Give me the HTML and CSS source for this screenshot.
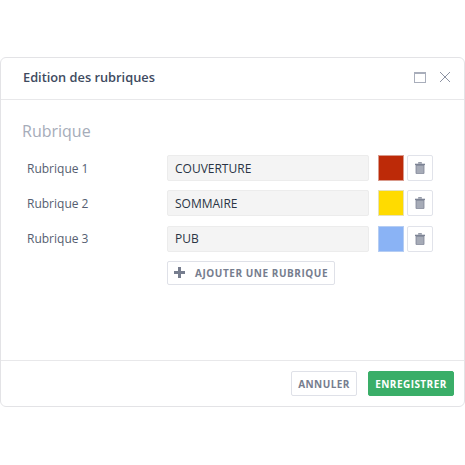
FILE: index.html
```html
<!DOCTYPE html>
<html lang="fr">
<head>
    <meta charset="UTF-8">
    <title>Edition des rubriques</title>
    <link rel="stylesheet" href="styles.css">
</head>
<body>
    <div class="modal">
        <div class="modal-header">
            <h1 class="modal-title">Edition des rubriques</h1>
            <div class="window-icons">
                <svg class="icon-max" width="12" height="11" viewBox="0 0 12 11">
                    <rect x="0.5" y="0.5" width="11" height="10" fill="none" stroke="#a9aebb"/>
                    <rect x="0" y="0" width="12" height="2" fill="#a9aebb"/>
                </svg>
                <svg class="icon-close" width="12" height="12" viewBox="0 0 12 12">
                    <path d="M1 1 L11 11 M11 1 L1 11" stroke="#8d93a3" stroke-width="1" fill="none"/>
                </svg>
            </div>
        </div>

        <div class="modal-body">
            <h2 class="section-title">Rubrique</h2>

            <div class="row">
                <label class="row-label">Rubrique 1</label>
                <input class="row-input" type="text" value="COUVERTURE">
                <span class="swatch swatch-red"></span>
                <button class="trash">
                    <svg width="10" height="12" viewBox="0 0 10 12"><path d="M3.5 1.5 V0.5 H6.5 V1.5 M0 2 H10 V3 H0 Z" fill="#7d8494" stroke="#7d8494" stroke-width="0.6"/><path d="M1 3.5 H9 V11 Q9 12 8 12 H2 Q1 12 1 11 Z" fill="#a6abb7" stroke="#7d8494" stroke-width="0.8"/></svg>
                </button>
            </div>
            <div class="row">
                <label class="row-label">Rubrique 2</label>
                <input class="row-input" type="text" value="SOMMAIRE">
                <span class="swatch swatch-yellow"></span>
                <button class="trash">
                    <svg width="10" height="12" viewBox="0 0 10 12"><path d="M3.5 1.5 V0.5 H6.5 V1.5 M0 2 H10 V3 H0 Z" fill="#7d8494" stroke="#7d8494" stroke-width="0.6"/><path d="M1 3.5 H9 V11 Q9 12 8 12 H2 Q1 12 1 11 Z" fill="#a6abb7" stroke="#7d8494" stroke-width="0.8"/></svg>
                </button>
            </div>
            <div class="row">
                <label class="row-label">Rubrique 3</label>
                <input class="row-input" type="text" value="PUB">
                <span class="swatch swatch-blue"></span>
                <button class="trash">
                    <svg width="10" height="12" viewBox="0 0 10 12"><path d="M3.5 1.5 V0.5 H6.5 V1.5 M0 2 H10 V3 H0 Z" fill="#7d8494" stroke="#7d8494" stroke-width="0.6"/><path d="M1 3.5 H9 V11 Q9 12 8 12 H2 Q1 12 1 11 Z" fill="#a6abb7" stroke="#7d8494" stroke-width="0.8"/></svg>
                </button>
            </div>

            <button class="add-btn">
                <svg width="11" height="11" viewBox="0 0 11 11"><path d="M4 0 H7 V4 H11 V7 H7 V11 H4 V7 H0 V4 H4 Z" fill="#767d8e"/></svg>
                AJOUTER UNE RUBRIQUE
            </button>
        </div>

        <div class="modal-footer">
            <button class="btn btn-cancel">ANNULER</button>
            <button class="btn btn-save">ENREGISTRER</button>
        </div>
    </div>
</body>
</html>
```

FILE: styles.css
```css
* {
    margin: 0;
    padding: 0;
    box-sizing: border-box;
}

html, body {
    height: 100%;
    overflow: hidden;
}

body {
    background: #fff;
    font-family: "Open Sans", sans-serif;
    padding-top: 57px;
}

.modal {
    width: 465px;
    height: 350px;
    border: 1px solid #e3e3e6;
    border-radius: 6px;
    display: flex;
    flex-direction: column;
}

.modal-header {
    height: 42px;
    flex: none;
    border-bottom: 1px solid #e8e8ea;
    padding: 0 13px 3px 22px;
    display: flex;
    align-items: center;
    justify-content: space-between;
}

.modal-title {
    font-size: 12.8px;
    font-weight: 600;
    color: #3e4a60;
}

.window-icons {
    display: flex;
    align-items: center;
    gap: 13px;
}

.window-icons svg {
    display: block;
}

.modal-body {
    flex: 1;
    padding: 20px 0 0 21px;
}

.section-title {
    font-size: 16px;
    font-weight: 400;
    line-height: 22px;
    color: #a6acb9;
    margin-bottom: 13px;
}

.row {
    display: flex;
    align-items: center;
    height: 26px;
    margin-bottom: 9.25px;
}

.row-label {
    width: 145px;
    padding-left: 5px;
    font-size: 12px;
    color: #555e71;
}

.row-input {
    width: 202px;
    height: 26px;
    border: 1px solid #ececec;
    border-radius: 2px;
    background: #f4f4f4;
    padding: 0 7px;
    font-family: "Open Sans", sans-serif;
    font-size: 12px;
    color: #2a3444;
}

.swatch {
    width: 26px;
    height: 26px;
    margin-left: 9px;
    border: 1px solid transparent;
}

.swatch-red {
    background: #bd2a08;
    border-color: #d99a8c;
}

.swatch-yellow {
    background: #ffdb00;
    border-color: #e6e2b8;
}

.swatch-blue {
    background: #8ab3f5;
    border-color: #b5cdf3;
}

.trash {
    width: 26px;
    height: 26px;
    margin-left: 3px;
    background: #fff;
    border: 1px solid #e1e3ea;
    border-radius: 2px;
    display: flex;
    align-items: center;
    justify-content: center;
}

.add-btn {
    width: 168px;
    height: 24px;
    margin-left: 145px;
    background: #fff;
    border: 1px solid #dfe1e8;
    border-radius: 2px;
    display: flex;
    align-items: center;
    gap: 10px;
    padding-left: 6px;
    font-family: "Open Sans", sans-serif;
    font-size: 10px;
    font-weight: 700;
    letter-spacing: 0.55px;
    color: #767d8e;
}

.modal-footer {
    height: 46px;
    flex: none;
    border-top: 1px solid #e8e8ea;
    padding: 10px 10px 0 0;
    display: flex;
    justify-content: flex-end;
    align-items: flex-start;
    gap: 11px;
}

.btn {
    height: 25px;
    border-radius: 2px;
    font-family: "Open Sans", sans-serif;
    font-size: 10px;
    font-weight: 700;
    letter-spacing: 0.45px;
}

.btn-cancel {
    width: 66px;
    background: #fff;
    border: 1px solid #dfe1e8;
    color: #767d8e;
}

.btn-save {
    width: 86px;
    background: #3aae68;
    border: 1px solid #3aae68;
    color: #fff;
}
```
